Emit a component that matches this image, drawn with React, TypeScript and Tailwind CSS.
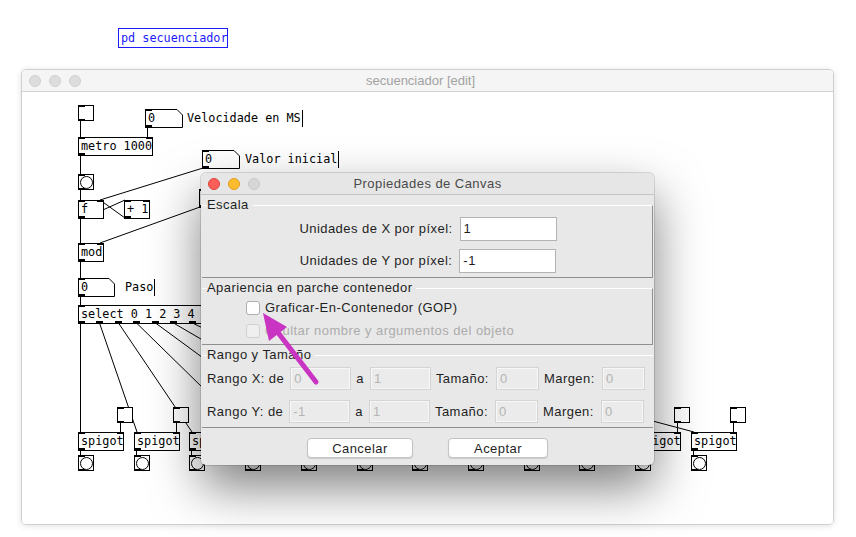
import React from 'react';

// page coords -> canvas coords (canvas starts under the title bar)
const OX = 22;
const OY = 92;

const SPIGOT_X = Array.from({ length: 12 }, (_, i) => Math.round(78 + i * 55.7));
const SELECT_W = 210;
const SELECT_OUTS = Array.from({ length: 12 }, (_, i) => Math.round(i * ((SELECT_W - 7) / 11)));

type BoxProps = { x: number; y: number; w: number; text: string; ins?: number[]; outs?: number[] };

function Box({ x, y, w, text, ins = [0], outs = [0] }: BoxProps) {
  return (
    <div
      className="absolute h-[19px] border border-black bg-white pl-[2px] leading-[17px] text-[11.8px] text-black whitespace-nowrap overflow-hidden"
      style={{ left: x - OX, top: y - OY, width: w }}
    >
      {text}
      {ins.map((o, i) => (
        <div key={'i' + i} className="absolute top-[-1px] h-[2px] w-[7px] bg-black" style={{ left: o - 1 }} />
      ))}
      {outs.map((o, i) => (
        <div key={'o' + i} className="absolute bottom-[-1px] h-[3px] w-[7px] bg-black" style={{ left: o - 1 }} />
      ))}
    </div>
  );
}

function NumBox({ x, y, w }: { x: number; y: number; w: number }) {
  return (
    <div className="absolute h-[19px] text-[11.8px] leading-[19px]" style={{ left: x - OX, top: y - OY, width: w }}>
      <svg className="absolute inset-0" width={w} height={19}>
        <polygon points={`0.5,0.5 ${w - 6},0.5 ${w - 0.5},6 ${w - 0.5},18.5 0.5,18.5`} fill="white" stroke="black" />
      </svg>
      <span className="relative pl-[3px]">0</span>
      <div className="absolute top-0 left-0 h-[2px] w-[7px] bg-black" />
      <div className="absolute bottom-0 left-0 h-[3px] w-[7px] bg-black" />
    </div>
  );
}

function Toggle({ x, y }: { x: number; y: number }) {
  return (
    <div className="absolute h-[16px] w-[16px] border border-black bg-white" style={{ left: x - OX, top: y - OY }}>
      <div className="absolute top-[-1px] left-[-1px] h-[2px] w-[7px] bg-black" />
      <div className="absolute bottom-[-1px] left-[-1px] h-[2px] w-[7px] bg-black" />
    </div>
  );
}

function Bang({ x, y }: { x: number; y: number }) {
  return (
    <div className="absolute flex h-[16px] w-[16px] items-center justify-center border border-black bg-white" style={{ left: x - OX, top: y - OY }}>
      <div className="h-[13px] w-[13px] rounded-full border border-black" />
      <div className="absolute top-[-1px] left-[-1px] h-[2px] w-[7px] bg-black" />
      <div className="absolute bottom-[-1px] left-[-1px] h-[2px] w-[7px] bg-black" />
    </div>
  );
}

function Label({ x, y, text, cursor }: { x: number; y: number; text: string; cursor?: boolean }) {
  return (
    <div className="absolute flex h-[19px] items-center text-[11.8px] text-black whitespace-nowrap" style={{ left: x - OX, top: y - OY }}>
      {text}
      {cursor && <div className="ml-[1px] h-[17px] w-px bg-black" />}
    </div>
  );
}

const cords: number[][] = [
  [80.5, 121, 80.5, 137],
  [147.5, 127, 147.5, 137],
  [80.5, 156, 80.5, 174],
  [80.5, 189, 80.5, 200],
  [203, 168, 100, 200],
  [85, 218, 125, 200],
  [125, 218, 100, 200],
  [80.5, 218, 80.5, 243],
  [200, 207, 100, 243],
  [80.5, 261, 80.5, 278],
  [80.5, 296, 80.5, 305],
  [80.5, 323, 80.5, 432],
  ...SELECT_OUTS.slice(1).map((o, i) => [78 + o + 3.5, 323, SPIGOT_X[i + 1] + 3, 432]),
  ...SPIGOT_X.map((sx) => [sx + 42.5, 422, sx + 42.5, 432]),
  ...SPIGOT_X.map((sx) => [sx + 2.5, 450, sx + 2.5, 455]),
];

function Light({ color, ring }: { color: string; ring: string }) {
  return <div className={`h-[12px] w-[12px] rounded-full border ${color} ${ring}`} />;
}

function DisabledInput({ w, value }: { w: string; value: string }) {
  return (
    <div className={`${w} flex h-[23px] items-center border border-[#d4d4d4] bg-[#ebebeb] pl-[3px] text-[#b4b4b4] shadow-[inset_0_0_0_1px_#f7f7f7]`}>
      {value}
    </div>
  );
}

function RangeRow({ axis, from }: { axis: string; from: string }) {
  return (
    <div className="flex items-center gap-[5px] pl-[5px]">
      <span className="mr-[1px]">Rango {axis}: de</span>
      <DisabledInput w="w-[61px]" value={from} />
      <span className="mr-[1px]">a</span>
      <DisabledInput w="w-[61px]" value="1" />
      <span className="w-[55px]">Tamaño:</span>
      <DisabledInput w="w-[43px]" value="0" />
      <span className="w-[53px]">Margen:</span>
      <DisabledInput w="w-[43px]" value="0" />
    </div>
  );
}

function Dialog() {
  const fieldset = 'mx-[1px] border-0 border-t border-t-white border-r border-b border-r-[#8f8f8f] border-b-[#8f8f8f]';
  const legend = 'ml-[5px] pr-[4px] leading-[16px]';
  return (
    <div className="absolute left-[201px] top-[173px] flex h-[292px] w-[453px] flex-col overflow-hidden rounded-[5px] bg-[#e8e8e8] font-['Liberation_Sans',Arial,sans-serif] text-[13px] tracking-[0.45px] text-[#1f1f1f] shadow-[0_22px_50px_rgba(0,0,0,0.5),0_0_0_1px_rgba(0,0,0,0.12)]">
      <div className="relative flex h-[22px] shrink-0 items-center gap-[8px] border-b border-[#c4c4c4] bg-[#e6e6e6] pl-[7px]">
        <Light color="bg-[#fc5f57]" ring="border-[#e0443e]" />
        <Light color="bg-[#fdbc2e]" ring="border-[#dea123]" />
        <Light color="bg-[#d6d6d6]" ring="border-[#c8c8c8]" />
        <div className="absolute inset-0 flex items-center justify-center text-[#4a4a4a]">Propiedades de Canvas</div>
      </div>
      <div className="pt-[2px]">
        <fieldset className={fieldset}>
          <legend className={legend}>Escala</legend>
          <div className="flex flex-col gap-[8px] pt-[4px] pb-[4px]">
            {[['X', '1'], ['Y', '-1']].map(([a, v]) => (
              <div key={a} className="flex items-center justify-center gap-[7px] pl-[2px]">
                <span>Unidades de {a} por píxel:</span>
                <div className="flex h-[24px] w-[97px] items-center border border-[#b3b3b3] bg-white pl-[3px]">{v}</div>
              </div>
            ))}
          </div>
        </fieldset>
        <fieldset className={`${fieldset} mt-[2px]`}>
          <legend className={legend}>Apariencia en parche contenedor</legend>
          <div className="flex flex-col gap-[5px] pt-[3px] pb-[4px] pl-[44px]">
            <div className="flex h-[18px] items-center gap-[5px]">
              <div className="h-[14px] w-[14px] rounded-[3px] border border-[#aeaeae] bg-white" />
              <span>Graficar-En-Contenedor (GOP)</span>
            </div>
            <div className="flex h-[18px] items-center gap-[5px] text-[#acacac]">
              <div className="h-[14px] w-[14px] rounded-[3px] border border-[#d0d0d0] bg-[#efefef]" />
              <span>Ocultar nombre y argumentos del objeto</span>
            </div>
          </div>
        </fieldset>
        <fieldset className={`${fieldset} mt-[2px] border-r-0`}>
          <legend className={legend}>Rango y Tamaño</legend>
          <div className="flex flex-col gap-[10px] pt-[4px] pb-[4px]">
            <RangeRow axis="X" from="0" />
            <RangeRow axis="Y" from="-1" />
          </div>
        </fieldset>
        <div className="mt-[10px] flex justify-center gap-[35px]">
          <button className="h-[20px] w-[106px] rounded-[4px] border border-[#c3c3c3] bg-white shadow-[0_1px_1px_rgba(0,0,0,0.12)]">Cancelar</button>
          <button className="h-[20px] w-[100px] rounded-[4px] border border-[#c3c3c3] bg-white shadow-[0_1px_1px_rgba(0,0,0,0.12)]">Aceptar</button>
        </div>
      </div>
    </div>
  );
}

function Arrow() {
  // tip near the GOP checkbox, tail down-right
  return (
    <svg className="pointer-events-none absolute inset-0" width={856} height={537}>
      <line x1={316} y1={382} x2={276} y2={330} stroke="#c935c2" strokeWidth={5} strokeLinecap="round" />
      <polygon points="263,313 287,327 269,341" fill="#c935c2" />
    </svg>
  );
}

export default function App() {
  return (
    <div className="relative flex h-[537px] w-[856px] flex-col overflow-hidden bg-white font-['DejaVu_Sans_Mono',monospace]">
      <div className="ml-[118px] mt-[28px] h-[20px] w-[110px] whitespace-nowrap border border-[#1b1bff] pl-[2px] text-[11.8px] leading-[18px] text-[#1b1bff]">
        pd secuenciador
      </div>
      <div className="ml-[21px] mt-[21px] flex h-[456px] w-[813px] flex-col overflow-hidden rounded-[5px] border border-[#cfcfcf] shadow-[0_1px_6px_rgba(0,0,0,0.12)]">
        <div className="relative flex h-[22px] shrink-0 items-center gap-[8px] border-b border-[#d3d3d3] bg-[#f5f5f5] pl-[7px]">
          <Light color="bg-[#dddddd]" ring="border-[#d0d0d0]" />
          <Light color="bg-[#dddddd]" ring="border-[#d0d0d0]" />
          <Light color="bg-[#dddddd]" ring="border-[#d0d0d0]" />
          <div className="absolute inset-0 flex items-center justify-center pr-[14px] font-['Liberation_Sans',Arial,sans-serif] text-[13px] text-[#a2a2a2]">
            secuenciador [edit]
          </div>
        </div>
        <div className="relative flex-1 bg-white">
          <svg className="absolute inset-0" width={811} height={432} viewBox={`${OX} ${OY} 811 432`}>
            {cords.map(([a, b, c, d], i) => (
              <line key={i} x1={a} y1={b} x2={c} y2={d} stroke="black" strokeWidth={1} />
            ))}
          </svg>
          <Toggle x={78} y={105} />
          <NumBox x={145} y={109} w={38} />
          <Label x={187} y={109} text="Velocidade en MS" cursor />
          <Box x={78} y={137} w={75} text="metro 1000" ins={[0, 68]} />
          <NumBox x={202} y={150} w={38} />
          <Label x={245} y={150} text="Valor inicial" cursor />
          <Bang x={78} y={174} />
          <Box x={199} y={189} w={40} text="10" ins={[0, 33]} />
          <Box x={78} y={200} w={26} text="f" ins={[0, 19]} />
          <Box x={124} y={200} w={26} text="+ 1" ins={[0, 19]} />
          <Box x={78} y={243} w={26} text="mod" ins={[0, 19]} />
          <NumBox x={78} y={278} w={37} />
          <Label x={125} y={278} text="Paso" cursor />
          <Box x={78} y={305} w={SELECT_W} text="select 0 1 2 3 4 5 6 7 8 9 10" ins={[0, SELECT_W - 7]} outs={SELECT_OUTS} />
          {SPIGOT_X.map((sx) => (
            <React.Fragment key={sx}>
              <Toggle x={sx + 39} y={407} />
              <Box x={sx} y={432} w={46} text="spigot" ins={[0, 39]} />
              <Bang x={sx} y={455} />
            </React.Fragment>
          ))}
        </div>
      </div>
      <Dialog />
      <Arrow />
    </div>
  );
}
